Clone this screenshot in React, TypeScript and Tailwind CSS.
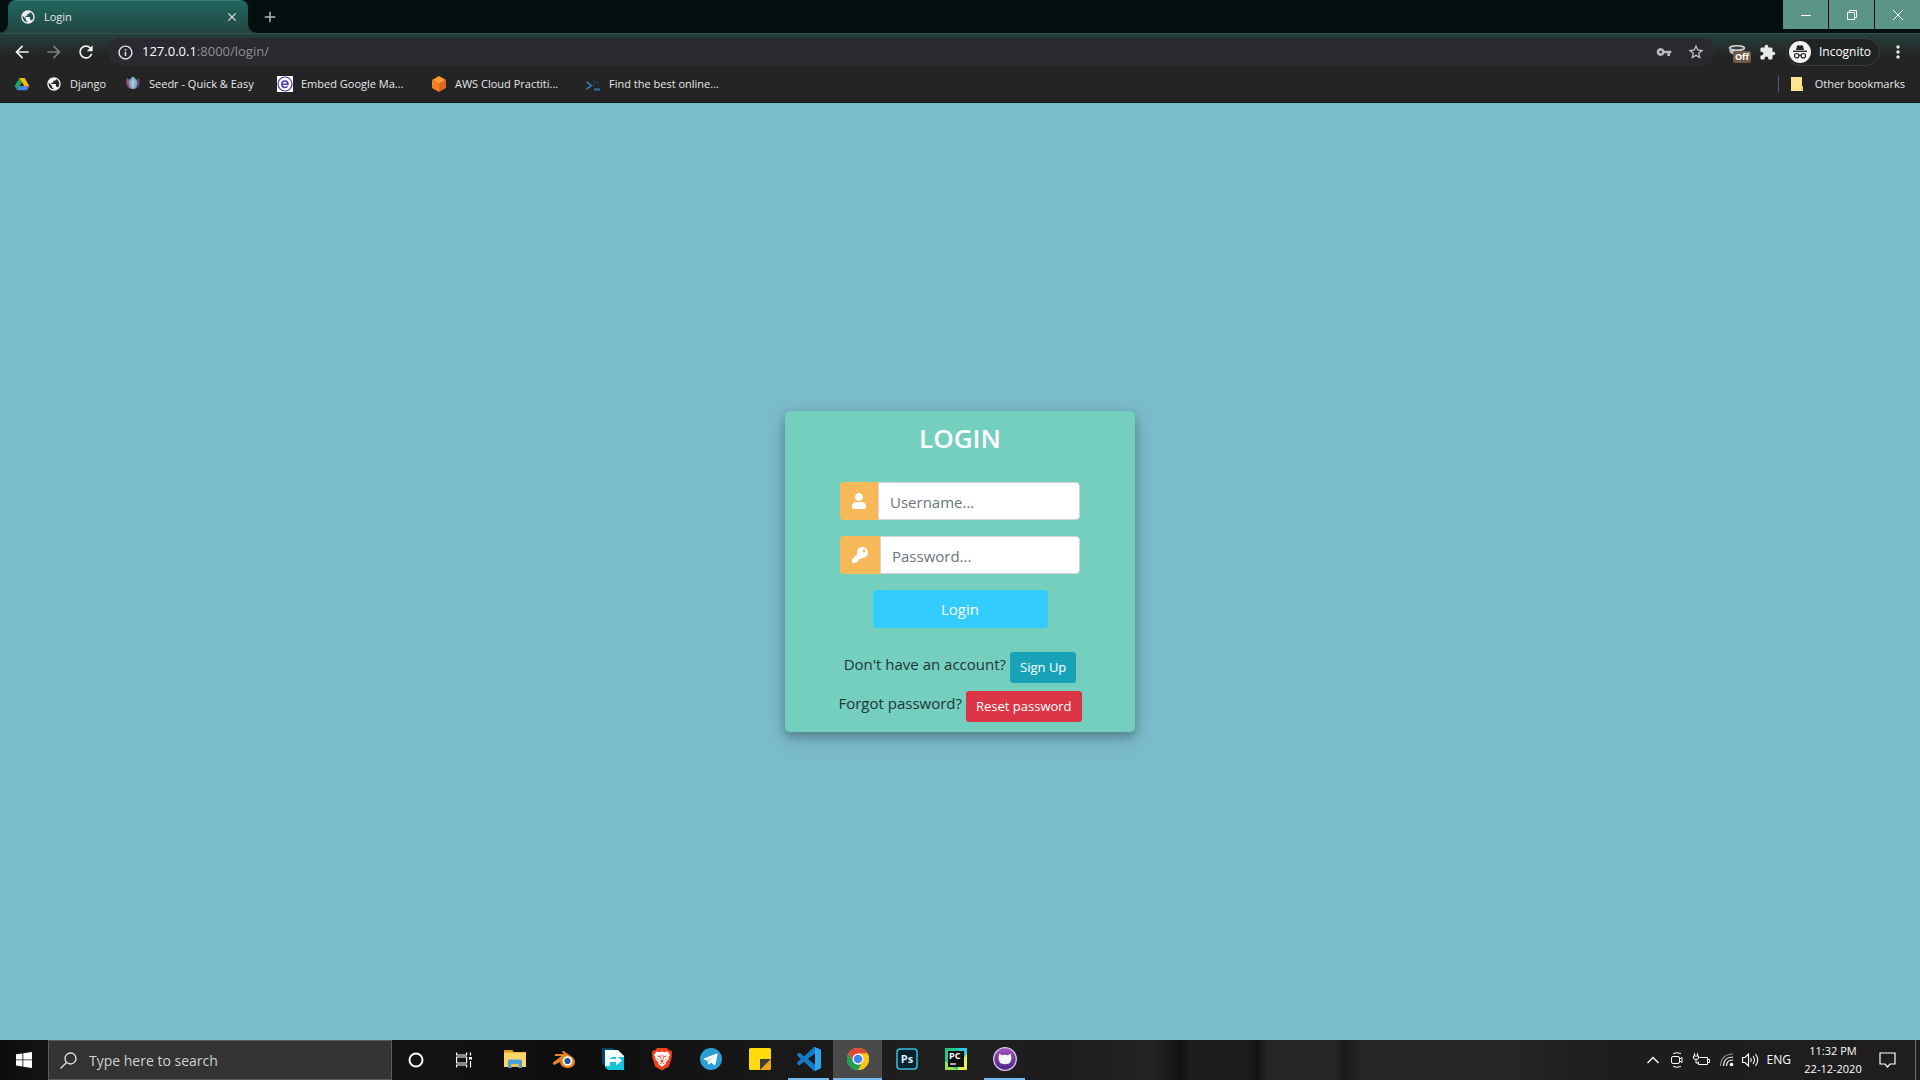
import type { ReactNode } from "react";
import {
  MdAdd,
  MdArrowBack,
  MdArrowForward,
  MdClose,
  MdExtension,
  MdInfoOutline,
  MdMoreVert,
  MdPublic,
  MdRefresh,
  MdStarBorder,
  MdVpnKey,
} from "react-icons/md";
import { FaKey, FaUser } from "react-icons/fa";

function DriveIcon() {
  return (
    <svg width="16" height="16" viewBox="0 0 16 16">
      <path d="M5.4 2h5.2L8 6.5z" fill="#188038" />
      <path d="M5.4 2 8 6.5 3.3 14.2.7 10z" fill="#1ea362" />
      <path d="M10.6 2 15.3 10H10L5.4 2z" fill="#fbbc04" />
      <path d="M3.3 14.2 5.6 10h9.7l-2.5 4.2z" fill="#4285f4" />
      <path d="M8 6.5 10 10H6z" fill="#242424" />
      <path d="M12.5 10h2.8l-1.4 2.300z" fill="#ea4335" />
    </svg>
  );
}

function SeedrIcon() {
  return (
    <svg width="16" height="16" viewBox="0 0 16 16">
      <path d="M2 2C.5 7 2 11.500 5.500 13h5C14 11.500 15.500 7 14 2l-3 2H5z" fill="#6d4485" />
      <path d="M2 2C.5 7 2 11.500 5.500 13L5 4z" fill="#9c4a7c" />
      <path d="M8 .5C5 2.500 3.500 5 4 8c.5 3 2 5 4 5s3.500-2 4-5c.5-3-1-5.500-4-7.500z" fill="#7fb0c6" />
      <path d="M8 3C6 6 6 9 8 12.500 10 9 10 6 8 3z" fill="#a3c9dc" />
    </svg>
  );
}

function EmbedIcon() {
  return (
    <svg width="16" height="16" viewBox="0 0 16 16">
      <rect width="16" height="16" fill="#fff" />
      <circle cx="8" cy="8" r="7" fill="none" stroke="#4a3bb0" strokeWidth="1.200" />
      <path d="M4.800 8.200h6.200c0-2-1.200-3.300-3-3.300S4.800 6.300 4.800 8.200 6.200 11.400 8 11.400c1.200 0 2-.4 2.700-1.200" fill="none" stroke="#4a3bb0" strokeWidth="1.500" />
    </svg>
  );
}

function AwsIcon() {
  return (
    <svg width="16" height="16" viewBox="0 0 16 16">
      <path d="m8 0 7 4-7 4-7-4z" fill="#fd9a30" />
      <path d="m1 4 7 4v8l-7-4z" fill="#f58220" />
      <path d="m15 4-7 4v8l7-4z" fill="#e2661c" />
    </svg>
  );
}

function PromptIcon() {
  return (
    <svg width="16" height="16" viewBox="0 0 16 16" fill="none">
      <path d="M9 3v7M9 7.500q4-3 4 0V10" stroke="#303538" strokeWidth="1.500" />
      <path d="m1.500 6 5 3.500-5 3.500" stroke="#3577a8" strokeWidth="1.700" />
      <path d="M9 13.500h6" stroke="#3577a8" strokeWidth="2" />
    </svg>
  );
}

function IncognitoIcon() {
  return (
    <svg width="22" height="22" viewBox="0 0 22 22">
      <circle cx="11" cy="11" r="11" fill="#f1f1f1" />
      <path d="m7 9 1-4c.3-.8 1-1 1.600-.7L11 4.800l1.400-.5c.6-.3 1.300 0 1.600.7l1 4z" fill="#242424" />
      <path d="M4 10.300h14" stroke="#242424" strokeWidth="1.300" />
      <g fill="none" stroke="#242424" strokeWidth="1.200">
        <circle cx="7.700" cy="14.700" r="2.200" />
        <circle cx="14.300" cy="14.700" r="2.200" />
        <path d="M9.900 14.400q1.100-.8 2.200 0" />
      </g>
    </svg>
  );
}

function ProxyIcon() {
  return (
    <svg width="22" height="22" viewBox="0 0 22 22">
      <path d="M2.500 7v4q2 3 8 3V9z" fill="#b9bcbb" />
      <ellipse cx="10" cy="7" rx="7.500" ry="2.300" fill="#3c4140" stroke="#d4d6d5" strokeWidth="1.600" />
    </svg>
  );
}

const bookmarks: { label: string; width: string; icon: ReactNode }[] = [
  { label: "", width: "w-8", icon: <DriveIcon /> },
  { label: "Django", width: "w-[79px]", icon: <MdPublic size={16} color="#f1f1f1" /> },
  { label: "Seedr - Quick & Easy", width: "w-[152px]", icon: <SeedrIcon /> },
  { label: "Embed Google Ma...", width: "w-[154px]", icon: <EmbedIcon /> },
  { label: "AWS Cloud Practiti...", width: "w-[154px]", icon: <AwsIcon /> },
  { label: "Find the best online...", width: "w-[154px]", icon: <PromptIcon /> },
];

function BrowserChrome() {
  return (
    <header className="border-b border-[#06181a] bg-[#242424] text-[#e6e8e8]">
      <div className="flex h-[33px] items-end bg-[#03100f]">
        <div className="size-2 bg-[radial-gradient(circle_at_0_0,transparent_7px,#24443f_8px)]" />
        <div className="flex h-[33px] w-60 items-center rounded-t-lg border-t border-[#3c7a73] bg-linear-to-b from-[#1b6961] to-[#24443f] pr-2 pl-3">
          <MdPublic size={16} color="#f1f1f1" />
          <span className="ml-2 flex-1 text-[11px]">Login</span>
          <button aria-label="Close tab" className="grid size-4 place-items-center">
            <MdClose size={14} />
          </button>
        </div>
        <div className="size-2 bg-[radial-gradient(circle_at_100%_0,transparent_7px,#24443f_8px)]" />
        <button aria-label="New tab" className="ml-1 grid h-[33px] w-5 place-items-center text-[#b4b8b8]">
          <MdAdd size={18} />
        </button>
        <div className="ml-auto flex gap-px self-start text-white">
          <button aria-label="Minimize" className="grid h-[29px] w-[45px] place-items-center bg-[#5b9587]">
            <svg width="10" height="10" viewBox="0 0 10 10" stroke="currentColor">
              <path d="M0 5.500h10" />
            </svg>
          </button>
          <button aria-label="Restore" className="grid h-[29px] w-[45px] place-items-center bg-[#5b9587]">
            <svg width="10" height="10" viewBox="0 0 10 10" fill="none" stroke="currentColor">
              <path d="M.5 2.500h7v7h-7zM2.500 2.500v-2h7v7h-2" />
            </svg>
          </button>
          <button aria-label="Close window" className="grid h-[29px] w-[45px] place-items-center bg-[#5b9587]">
            <svg width="10" height="10" viewBox="0 0 10 10" stroke="currentColor">
              <path d="m0 0 10 10M10 0 0 10" />
            </svg>
          </button>
        </div>
      </div>

      <div className="flex items-center border-t border-[#36524e] bg-linear-to-b from-[#24403c] to-[#242424] to-70% pt-1 pr-3">
        <button aria-label="Back" className="ml-3 text-[#f1f1f1]">
          <MdArrowBack size={20} />
        </button>
        <button aria-label="Forward" className="ml-3 text-[#7c7f7e]">
          <MdArrowForward size={20} />
        </button>
        <button aria-label="Reload" className="ml-3 text-[#f1f1f1]">
          <MdRefresh size={20} />
        </button>
        <div className="ml-3 flex h-7 flex-1 items-center rounded-full bg-[#2a292f] pr-2.5 pl-[9px]">
          <MdInfoOutline size={17} />
          <span className="ml-2 flex-1 text-[13px] text-white">
            127.0.0.1<span className="text-[#8f9092]">:8000/login/</span>
          </span>
          <MdVpnKey size={16} color="#b8babc" />
          <MdStarBorder size={18} color="#c9cbcd" className="ml-[15px]" />
        </div>
        <div className="relative ml-3">
          <ProxyIcon />
          <span className="absolute top-2.5 left-1.5 rounded-xs bg-[#6f5b48] px-0.5 text-[9px] leading-3 font-bold text-white">
            Off
          </span>
        </div>
        <MdExtension size={17} color="#e8eaea" className="ml-2.5" />
        <div className="ml-2.5 flex h-7 items-center gap-2 rounded-full border border-[#3b3f3f] bg-[#202424] pr-2 pl-0.5 text-[12px] text-white">
          <IncognitoIcon />
          Incognito
        </div>
        <button aria-label="Menu" className="ml-2">
          <MdMoreVert size={20} />
        </button>
      </div>

      <nav className="flex h-9 items-center pr-[15px] pl-3.5 text-[11px]">
        {bookmarks.map((b, i) => (
          <a key={i} href="#" aria-label={b.label || "Drive"} className={`flex items-center gap-2 whitespace-nowrap ${b.width}`}>
            {b.icon}
            {b.label}
          </a>
        ))}
        <a href="#" className="ml-auto flex items-center gap-2.5 border-l border-[#55585a] pl-3">
          <svg width="14" height="16" viewBox="0 0 14 16">
            <path d="M0 1h11v9h1v5H0z" fill="#ffe591" />
            <path d="M10 10h2v4h-2z" fill="#f1cd62" />
          </svg>
          Other bookmarks
        </a>
      </nav>
    </header>
  );
}

function LoginCard() {
  return (
    <form className="flex w-[350px] flex-col items-center rounded-[5px] bg-[#75cfbf] pb-2.5 text-[15px] text-[#1e3536] shadow-[0_4px_8px_rgba(0,0,0,0.2),0_6px_20px_rgba(0,0,0,0.19)]">
      <h1 className="mt-2.5 text-[26px] leading-[34px] font-semibold text-white">LOGIN</h1>
      <label className="mt-[27px] flex h-[38px] w-60">
        <span className="grid w-[38px] place-items-center rounded-l bg-[#f6b859] text-white">
          <FaUser size={16} />
        </span>
        <input
          type="text"
          aria-label="Username"
          placeholder="Username..."
          className="min-w-0 flex-1 rounded-r border border-[#ced4da] bg-white px-[11px] pt-0.5 placeholder:text-[#6c757d]"
        />
      </label>
      <label className="mt-4 flex h-[38px] w-60">
        <span className="grid w-10 place-items-center rounded-l bg-[#f6b859] text-white">
          <FaKey size={16} />
        </span>
        <input
          type="password"
          aria-label="Password"
          placeholder="Password..."
          className="min-w-0 flex-1 rounded-r border border-[#ced4da] bg-white px-[11px] pt-0.5 placeholder:text-[#6c757d]"
        />
      </label>
      <button type="button" className="mt-4 h-[38px] w-[175px] rounded bg-[#33ccff] text-white">
        Login
      </button>
      <div className="mt-6 flex gap-1">
        <span className="leading-6">Don't have an account?</span>
        <a href="#" className="rounded-[3px] bg-[#17a2b8] px-2.5 text-[13px] leading-[31px] text-white">
          Sign Up
        </a>
      </div>
      <div className="mt-2 flex gap-1">
        <span className="leading-6">Forgot password?</span>
        <a href="#" className="rounded-[3px] bg-[#dc3545] px-2.5 text-[13px] leading-[31px] text-white">
          Reset password
        </a>
      </div>
    </form>
  );
}

function ExplorerIcon() {
  return (
    <svg width="22" height="22" viewBox="0 0 22 22">
      <path d="M0 2h8l1.500 2H22v15H0z" fill="#f5b92f" />
      <path d="M0 5h22v14H0z" fill="#ffd56b" />
      <path d="M0 2h8l1.500 2H0z" fill="#dd9b1a" />
      <path d="M4 20v-7q0-1.500 1.500-1.500h11q1.500 0 1.500 1.500v7h-3.500v-4h-7v4z" fill="#4a9edb" />
      <path d="M7.500 16h7v3h-7z" fill="#f1c355" />
    </svg>
  );
}

function BlenderIcon() {
  return (
    <svg width="24" height="20" viewBox="0 0 24 20">
      <path
        d="M1 13.500 9.500 7H3.200Q2 6 3.200 5h9L10 3.200Q10 1.700 11.700 2l8.500 6c3.600 2.700 3.500 7 .8 9.200-3 2.400-8 2.300-10.800 0-1.400-1.200-2-2.600-2-4.200L3.200 15.500C1.600 16.300.2 14.600 1 13.500z"
        fill="#e58421"
      />
      <circle cx="15.500" cy="12" r="4.800" fill="#fff" />
      <circle cx="15.500" cy="12" r="3.100" fill="#24598f" />
    </svg>
  );
}

function TransferIcon() {
  return (
    <svg width="24" height="24" viewBox="0 0 24 24">
      <path d="M1 1h11l3 3v15H4l-3-3z" fill="#06446b" />
      <path d="M4 4h13l6 5v14H7l-3-3z" fill="#12c3dc" />
      <path d="M4 3h13l6 6v1H11v1H4z" fill="#f2feff" />
      <path d="M4 10h5v9H4z" fill="#e3fafc" />
      <path d="M8 12h7V8.500l6 5-6 5V15H8z" fill="#fff" />
    </svg>
  );
}

function BraveIcon() {
  return (
    <svg width="22" height="24" viewBox="0 0 22 24">
      <path d="M6 1h10l2 2.500 2-.2 1.300 3-.7 2 .3 1.500-3 9.700L11 23.500l-6.900-4-3-9.700.3-1.500-.7-2 1.300-3 2 .2z" fill="#f4401f" />
      <path d="m5.500 4.500 2.800.7L11 4.500l2.700.7 2.800-.7L19 8l-1.500 2.500.2 1.700-3.400 3.300.7 1.300L11 19.800l-4-3 .7-1.300-3.400-3.300.2-1.700L3 8z" fill="#fff" />
      <path d="m6 8.300 3.300.9-1.200 1.200zM16 8.300l-3.300.9 1.200 1.200zM10.500 13h1l1.300 1.400L11 15.600l-1.800-1.200z" fill="#f4401f" />
      <path d="m10 7.500-.5 4 1 1.500M12 7.500l.5 4-1 1.500M6 11.500l2 2M16 11.500l-2 2M8.800 16.800 11 15.600l2.200 1.200" fill="none" stroke="#f4401f" strokeWidth=".8" />
    </svg>
  );
}

function TelegramIcon() {
  return (
    <svg width="22" height="22" viewBox="0 0 22 22">
      <circle cx="11" cy="11" r="11" fill="#2c9ed6" />
      <path d="m4 10.500 12.500-4.900c.7-.2 1.200.2 1 1.100l-2.100 9.700c-.2.800-.7.900-1.300.6l-3.200-2.400-1.700 1.600c-.5.500-.9.300-1-.3l-.9-3.400-3.200-1c-.7-.3-.7-.7-.1-1z" fill="#fff" />
      <path d="m7.800 12.300 7-4.600-5.600 5.500-.2 2.600z" fill="#a8d3ec" />
    </svg>
  );
}

function NotesIcon() {
  return (
    <svg width="22" height="22" viewBox="0 0 22 22">
      <path d="M1 0h20l1 1v10L11 22H1l-1-1V1z" fill="#fedb0b" />
      <path d="M11 11h11L11 22z" fill="#3b3b3b" />
      <path d="M22 11v10l-1 1H11z" fill="#e9a712" />
    </svg>
  );
}

function CodeIcon() {
  return (
    <svg width="24" height="24" viewBox="0 0 24 24">
      <path
        d="M23.15 2.587 18.21.21a1.494 1.494 0 0 0-1.705.29l-9.46 8.630-4.120-3.128a.999.999 0 0 0-1.276.057L.327 7.261A1 1 0 0 0 .326 8.740L3.899 12 .326 15.260a1 1 0 0 0 .001 1.479L1.650 17.940a.999.999 0 0 0 1.276.057l4.120-3.128 9.460 8.630a1.492 1.492 0 0 0 1.704.290l4.942-2.377A1.500 1.500 0 0 0 24 20.060V3.939a1.500 1.500 0 0 0-.850-1.352zm-5.146 14.861L10.826 12l7.178-5.448z"
        fill="#1679c4"
      />
      <path d="m18.210.21 4.940 2.377q.85.5.85 1.352V20.060q0 .85-.85 1.350l-4.940 2.380q-.7.200-1.200-.1 1 0 1-1.200V1.500q0-1-1-1.200.6-.3 1.200-.09z" fill="#2fa5ee" />
    </svg>
  );
}

function ChromeIcon() {
  return (
    <svg width="22" height="22" viewBox="0 0 22 22">
      <circle cx="11" cy="11" r="11" fill="#fbc618" />
      <path d="M1.470 5.500A11 11 0 0 1 20.530 5.500H11L6.240 13.750z" fill="#e0443a" />
      <path d="M1.470 5.500 6.240 13.750 11 16.500h4.760L11 22A11 11 0 0 1 1.470 5.500z" fill="#1f9f57" />
      <path d="M15.760 13.750 11 22A11 11 0 0 0 20.530 5.500H11z" fill="#fbc618" />
      <circle cx="11" cy="11" r="5.500" fill="#fff" />
      <circle cx="11" cy="11" r="4.300" fill="#4286f5" />
    </svg>
  );
}

function PhotoIcon() {
  return (
    <svg width="22" height="22" viewBox="0 0 22 22">
      <rect x="1" y="1" width="20" height="20" rx="3" fill="#06222e" stroke="#35c1e0" strokeWidth="1.500" />
      <text x="11" y="15" textAnchor="middle" fontSize="11" fontWeight="700" fill="#d7f4fb">
        Ps
      </text>
    </svg>
  );
}

function PyCharmIcon() {
  return (
    <svg width="22" height="22" viewBox="0 0 22 22">
      <path d="M0 0h22v22H0z" fill="#21c98a" />
      <path d="M11 0h11v8z" fill="#2fc4e3" />
      <path d="M22 5v17H12z" fill="#e9ee57" />
      <path d="M0 13v9h12z" fill="#9be052" />
      <path d="M3 3h16v16H3z" fill="#111" />
      <text x="4" y="11" fontSize="9" fontWeight="700" fill="#fff">
        PC
      </text>
      <path d="M5 16h6" stroke="#fff" strokeWidth="1.300" />
    </svg>
  );
}

function GithubDesktopIcon() {
  return (
    <svg width="24" height="24" viewBox="0 0 24 24">
      <defs>
        <linearGradient id="desk" x2="0" y2="1">
          <stop stopColor="#a354c0" />
          <stop offset="1" stopColor="#4c2384" />
        </linearGradient>
      </defs>
      <circle cx="12" cy="12" r="11.300" fill="url(#desk)" stroke="#d8c9e4" strokeWidth="1.300" />
      <path d="M6.300 6.500 9 8.200q3-.8 6 0l2.700-1.700.7 4q.5 6.800-6.400 6.800t-6.400-6.800z" fill="#f4f4f4" />
    </svg>
  );
}

const apps: { name: string; icon: ReactNode; state: "idle" | "open" | "active" }[] = [
  { name: "File Explorer", icon: <ExplorerIcon />, state: "idle" },
  { name: "Blender", icon: <BlenderIcon />, state: "idle" },
  { name: "Transfer", icon: <TransferIcon />, state: "idle" },
  { name: "Brave", icon: <BraveIcon />, state: "idle" },
  { name: "Telegram", icon: <TelegramIcon />, state: "idle" },
  { name: "Sticky Notes", icon: <NotesIcon />, state: "idle" },
  { name: "Visual Studio Code", icon: <CodeIcon />, state: "open" },
  { name: "Chrome", icon: <ChromeIcon />, state: "active" },
  { name: "Photoshop", icon: <PhotoIcon />, state: "idle" },
  { name: "PyCharm", icon: <PyCharmIcon />, state: "idle" },
  { name: "GitHub Desktop", icon: <GithubDesktopIcon />, state: "open" },
];

const appStyle = {
  idle: "border-transparent",
  open: "mx-1 border-[#76b9ed]",
  active: "border-[#76b9ed] bg-[#4a4a4a]",
};

function Taskbar() {
  return (
    <footer className="flex h-10 items-stretch bg-[linear-gradient(90deg,#0c0c0c_0%,#1a1a1a_4%,#141414_20%,#0e0e0e_30%,#181818_40%,#202020_50%,#1c1c1c_55%,#242424_60%,#121212_61.5%,#1d1d1d_62%,#1d1d1d_65%,#121212_65.5%,#262626_66%,#262626_69.5%,#191919_70%,#262626_71%,#262626_78%,#1d1d1d_84%,#1e1e1e_100%)] text-white">
      <button aria-label="Start" className="grid w-12 place-items-center">
        <svg width="16" height="16" viewBox="0 0 16 16" fill="#fff">
          <path d="m0 2.300 6.500-.9v6.100H0zM7.300 1.300 16 0v7.500H7.300zM0 8.300h6.500v6.200L0 13.600zM7.300 8.300H16V16l-8.700-1.300z" />
        </svg>
      </button>
      <label className="flex w-[344px] items-center gap-3 border border-[#5c5c5c] bg-[#333] pl-[11px]">
        <svg width="17" height="17" viewBox="0 0 17 17" fill="none" stroke="#e6e6e6" strokeWidth="1.300">
          <circle cx="10.500" cy="6.500" r="5.500" />
          <path d="M6.500 10.500.5 16.500" />
        </svg>
        <input
          type="text"
          aria-label="Search"
          placeholder="Type here to search"
          className="min-w-0 flex-1 text-[14px] placeholder:text-[#d0d0d0]"
        />
      </label>
      <button aria-label="Cortana" className="grid w-12 place-items-center">
        <svg width="16" height="16" viewBox="0 0 16 16" fill="none" stroke="#fff" strokeWidth="2">
          <circle cx="8" cy="8" r="6.500" />
        </svg>
      </button>
      <button aria-label="Task view" className="mr-0.5 grid w-12 place-items-center">
        <svg width="16" height="16" viewBox="0 0 16 16" fill="none" stroke="#fff" strokeWidth="1.200">
          <path d="M.6.500V3h10V.5M.6 15.500V13h10v2.500M.6 5h10v6H.6zM14.500.5v3M14.500 9v6.500" />
          <path d="M13 5h3v2.500h-3z" fill="#fff" stroke="none" />
        </svg>
      </button>
      {apps.map((a) => (
        <div key={a.name} className="grid w-[49px]">
          <button aria-label={a.name} className={`grid place-items-center border-b-2 ${appStyle[a.state]}`}>
            {a.icon}
          </button>
        </div>
      ))}

      <div className="ml-auto flex items-center">
        <svg width="12" height="8" viewBox="0 0 12 8" fill="none" stroke="#fff" strokeWidth="1.300">
          <path d="m.5 7 5.500-5.500L11.500 7" />
        </svg>
        <svg width="12" height="16" viewBox="0 0 12 16" fill="none" stroke="#fff" className="ml-3">
          <path d="M2 1.500q4-1.500 8 0M2 14.500q4 1.500 8 0" />
          <rect x=".5" y="4.500" width="8" height="7" rx="1.500" />
          <path d="m8.500 7 2.500-1.500v5L8.500 9z" />
        </svg>
        <svg width="17" height="14" viewBox="0 0 17 14" fill="none" stroke="#fff" className="ml-2.5">
          <path d="M6.500 4.500h8v7h-9v-3M15 6.500h1.500v3H15M1.500 0v3M4.500 0v3M.5 3h5v2q0 1.500-2.500 1.500T.5 5zM3 6.500v3.500h2.500" />
        </svg>
        <svg width="14" height="14" viewBox="0 0 14 14" fill="none" className="ml-2.5">
          <path d="M.5 13C.5 6 5 1 13 1" stroke="#999" strokeWidth="1.200" />
          <path d="M3.500 13C3.500 7.500 7 4 13 4M6.500 13C6.500 9 9 7 13 7" stroke="#fff" strokeWidth="1.200" />
          <circle cx="11.500" cy="11.500" r="1.800" fill="#fff" />
        </svg>
        <svg width="17" height="14" viewBox="0 0 17 14" fill="none" stroke="#fff" strokeWidth="1.100" className="ml-2">
          <path d="M.6 4.500H3l3.500-3.500v12L3 9.500H.6zM8.500 5q1.500 2 0 4M11 3q3 4 0 8M13.500 1q4.500 6 0 12" />
        </svg>
        <span className="ml-2 text-[12px]">ENG</span>
        <time className="ml-3 w-[60px] text-center text-[11px] leading-[18px] whitespace-nowrap">
          11:32 PM
          <br />
          22-12-2020
        </time>
        <button aria-label="Notifications" className="ml-4">
          <svg width="17" height="16" viewBox="0 0 17 16" fill="none" stroke="#fff" strokeWidth="1.200">
            <path d="M1 1h15v11h-5l-2.500 3L6 12H1z" />
          </svg>
        </button>
        <span className="ml-[19px] h-10 w-[5px] border-l border-[#707070]" />
      </div>
    </footer>
  );
}

export default function App() {
  return (
    <div className="flex min-h-screen flex-col font-['Open_Sans','Noto_Sans',sans-serif]">
      <BrowserChrome />
      <main className="flex flex-1 items-center justify-center bg-[#7bbccb]">
        <LoginCard />
      </main>
      <Taskbar />
    </div>
  );
}
